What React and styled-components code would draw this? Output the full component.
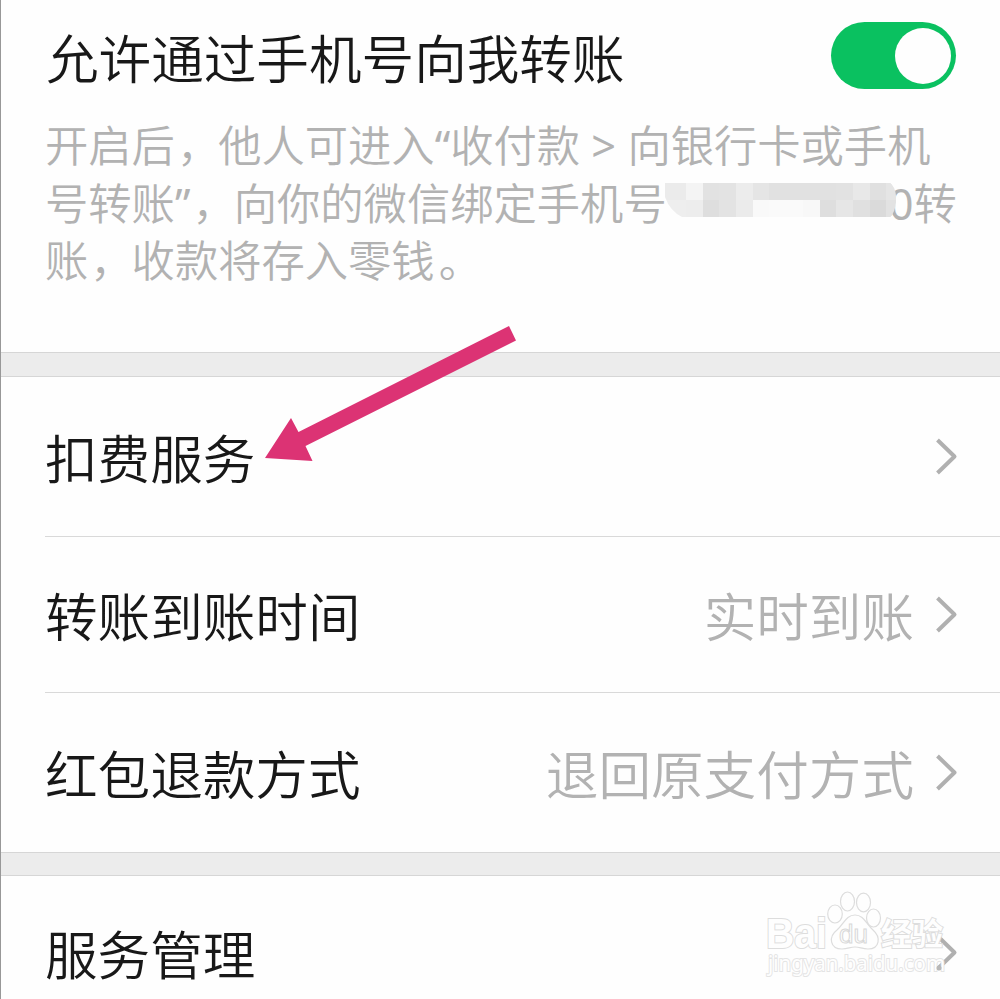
import React from "react";
import styled, { createGlobalStyle } from "styled-components";

const GlobalStyle = createGlobalStyle`
  * { box-sizing: border-box; }
  body { margin: 0; background: #fefefe; overflow: hidden; }
`;

const Screen = styled.main`
  position: relative;
  width: 1000px;
  height: 999px;
  overflow: hidden;
  display: flex;
  flex-direction: column;
  background: #fefefe;
  border-left: 1px solid #989898;
  font-family: "Noto Sans", "Noto Sans CJK SC", sans-serif;
  font-weight: 350;
  color: #181818;
`;

const TransferSection = styled.section`
  height: 352px;
  flex: none;
  padding: 20px 44px 0 45px;
`;

const TitleRow = styled.div`
  display: flex;
  align-items: flex-start;
  justify-content: space-between;
  height: 97px;
`;

const Label = styled.span`
  padding-top: ${(p) => (p.$title ? 1 : 4)}px;
  font-size: 52.6px;
  line-height: 76px;
  white-space: nowrap;
  color: ${(p) => (p.$muted ? "#b2b2b2" : "#181818")};
`;

const Switch = styled.button`
  display: flex;
  justify-content: flex-end;
  align-items: center;
  width: 125px;
  height: 67px;
  margin-top: 2px;
  padding: 0 5px;
  border: 0;
  border-radius: 34px;
  background: #0ac160;
`;

const Knob = styled.span`
  width: 56px;
  height: 56px;
  border-radius: 50%;
  background: #fefefe;
`;

const Description = styled.div`
  display: flex;
  flex-direction: column;
  margin-left: -1px;
  font-size: 43.3px;
  line-height: 57.5px;
  color: #b2b2b2;
`;

const Line = styled.div`
  display: flex;
  height: 57.5px;
  white-space: pre;
`;

const Stop = styled.span`
  width: 1em;
  flex: none;
  text-indent: ${(p) => p.$shift}px;
`;

const Latin = styled.span`
  font-weight: 400;
`;

const Mosaic = styled.svg`
  flex: none;
  width: 231px;
  height: 36px;
  margin: 7px -7px 0 -2px;
  z-index: 1;
`;

const Band = styled.div`
  height: ${(p) => p.$height}px;
  flex: none;
  background: #ececec;
  border-top: 1px solid #d6d6d6;
  border-bottom: 1px solid #d6d6d6;
`;

const Row = styled.div`
  display: flex;
  align-items: center;
  flex: none;
  height: ${(p) => p.$height}px;
  margin-left: 44px;
  padding-right: 42px;
  border-bottom: ${(p) => (p.$last ? "0" : "1px solid #d9d9d9")};
`;

const Value = styled.div`
  display: flex;
  align-items: center;
  gap: 21px;
  margin-left: auto;
`;

const Chevron = styled.svg`
  width: 23px;
  height: 38px;
  flex: none;
`;

const Arrow = styled.svg`
  position: absolute;
  left: 262px;
  top: 324px;
  width: 254px;
  height: 140px;
`;

const Watermark = styled.svg`
  position: absolute;
  left: 762px;
  top: 888px;
  width: 190px;
  height: 94px;
`;

const MOSAIC = [
  [0, "#ebebeb", "#eeeeee"], [21, "#f4f4f4", "#ededed"],
  [38, "#e2e2e2", "#dedede"], [54, "#e3e3e3", "#e3e3e3"], [71, "#ececec", "#ebebeb"],
  [88, "#e5e5e5", "#f9f9f9"], [104, "#e1e1e1", "#fafafa"], [121, "#e1e1e1", "#fafafa"],
  [138, "#e1e1e1", "#f8f8f8"], [155, "#e1e1e1", "#dedede"], [171, "#e2e2e2", "#e6e6e6"],
  [188, "#e8e8e8", "#e0e0e0"], [205, "#e0e0e0", "#dadada"], [221, "#e5e5e5", "#e2e2e2"],
];

function PhoneMask() {
  return (
    <Mosaic viewBox="0 0 231 36">
      <clipPath id="mask-shape">
        <path d="M0 1H225Q232 6 231 20Q230 31 225 35H17Q5 29 0 15Z" />
      </clipPath>
      <g clipPath="url(#mask-shape)">
        {MOSAIC.map(([x, top, bottom]) => (
          <React.Fragment key={x}>
            <rect x={x} y="1" width="22" height="17" fill={top} />
            <rect x={x} y="18" width="22" height="17" fill={bottom} />
          </React.Fragment>
        ))}
      </g>
    </Mosaic>
  );
}

function SettingRow({ label, value, height, last }) {
  return (
    <Row $height={height} $last={last}>
      <Label>{label}</Label>
      <Value>
        {value && <Label $muted>{value}</Label>}
        <Chevron viewBox="0 0 23 38" fill="none" stroke="#b0b0b0" strokeWidth="4">
          <path d="M2.5 2L19.5 18.5L2.5 35" strokeLinejoin="round" />
        </Chevron>
      </Value>
    </Row>
  );
}

function BaiduMark() {
  return (
    <Watermark viewBox="763 888 190 94" fill="#fefefe" stroke="#dddddd" strokeWidth="1.2">
      <text x="766" y="948" fontFamily="Liberation Sans, sans-serif" fontWeight="700" fontSize="42" textLength="61" lengthAdjust="spacingAndGlyphs" strokeWidth="2" paintOrder="stroke">Bai</text>
      <path d="M855 915C846 915 844 924 837 930C828 937 830 949 842 949C848 949 850 947 855 947C860 947 862 949 868 949C880 949 881 937 873 930C866 924 864 915 855 915Z" />
      <ellipse cx="835" cy="914" rx="7.3" ry="9" />
      <ellipse cx="847.5" cy="901.5" rx="7" ry="9.5" />
      <ellipse cx="863.5" cy="902.5" rx="7" ry="9.3" />
      <ellipse cx="873.5" cy="918" rx="7" ry="9" />
      <text x="839" y="943" fontFamily="Liberation Sans, sans-serif" fontSize="26" textLength="29" stroke="#d8d8d8" strokeWidth="1">du</text>
      <text x="881" y="945" fontFamily="Noto Sans CJK SC, sans-serif" fontWeight="700" fontSize="31" strokeWidth="2" paintOrder="stroke">经验</text>
      <text x="768" y="971" fontFamily="Noto Sans, sans-serif" fontWeight="400" fontSize="22.5" textLength="177" lengthAdjust="spacingAndGlyphs" stroke="#e4e4e4" strokeWidth="2" paintOrder="stroke">jingyan.baidu.com</text>
      <circle cx="939" cy="968" r="2.5" fill="#b8b8b8" stroke="none" />
    </Watermark>
  );
}

export default function App() {
  return (
    <>
      <GlobalStyle />
      <Screen>
        <TransferSection>
          <TitleRow>
            <Label $title>允许通过手机号向我转账</Label>
            <Switch role="switch" aria-checked="true">
              <Knob />
            </Switch>
          </TitleRow>
          <Description>
            <Line>
              开启后<Stop $shift={2}>，</Stop>他人可进入<Latin>“</Latin>收付款<Latin> &gt; </Latin>向银行卡或手机
            </Line>
            <Line>
              号转账<Latin>”</Latin><Stop $shift={2}>，</Stop>向你的微信绑定手机号<PhoneMask /><Latin>0</Latin>转
            </Line>
            <Line>
              账<Stop $shift={2}>，</Stop>收款将存入零钱<Stop $shift={4}>。</Stop>
            </Line>
          </Description>
        </TransferSection>
        <Band $height={25} />
        <SettingRow label="扣费服务" height={160} />
        <SettingRow label="转账到账时间" value="实时到账" height={156} />
        <SettingRow label="红包退款方式" value="退回原支付方式" height={159} last />
        <Band $height={24} />
        <SettingRow label="服务管理" height={154} last />
        <Arrow viewBox="263 324 254 140">
          <path fill="#dc3374" d="M265 458L291 418L298.5 432L509 326L516 340.500L305.500 446L312.500 461Z" />
        </Arrow>
        <BaiduMark />
      </Screen>
    </>
  );
}
